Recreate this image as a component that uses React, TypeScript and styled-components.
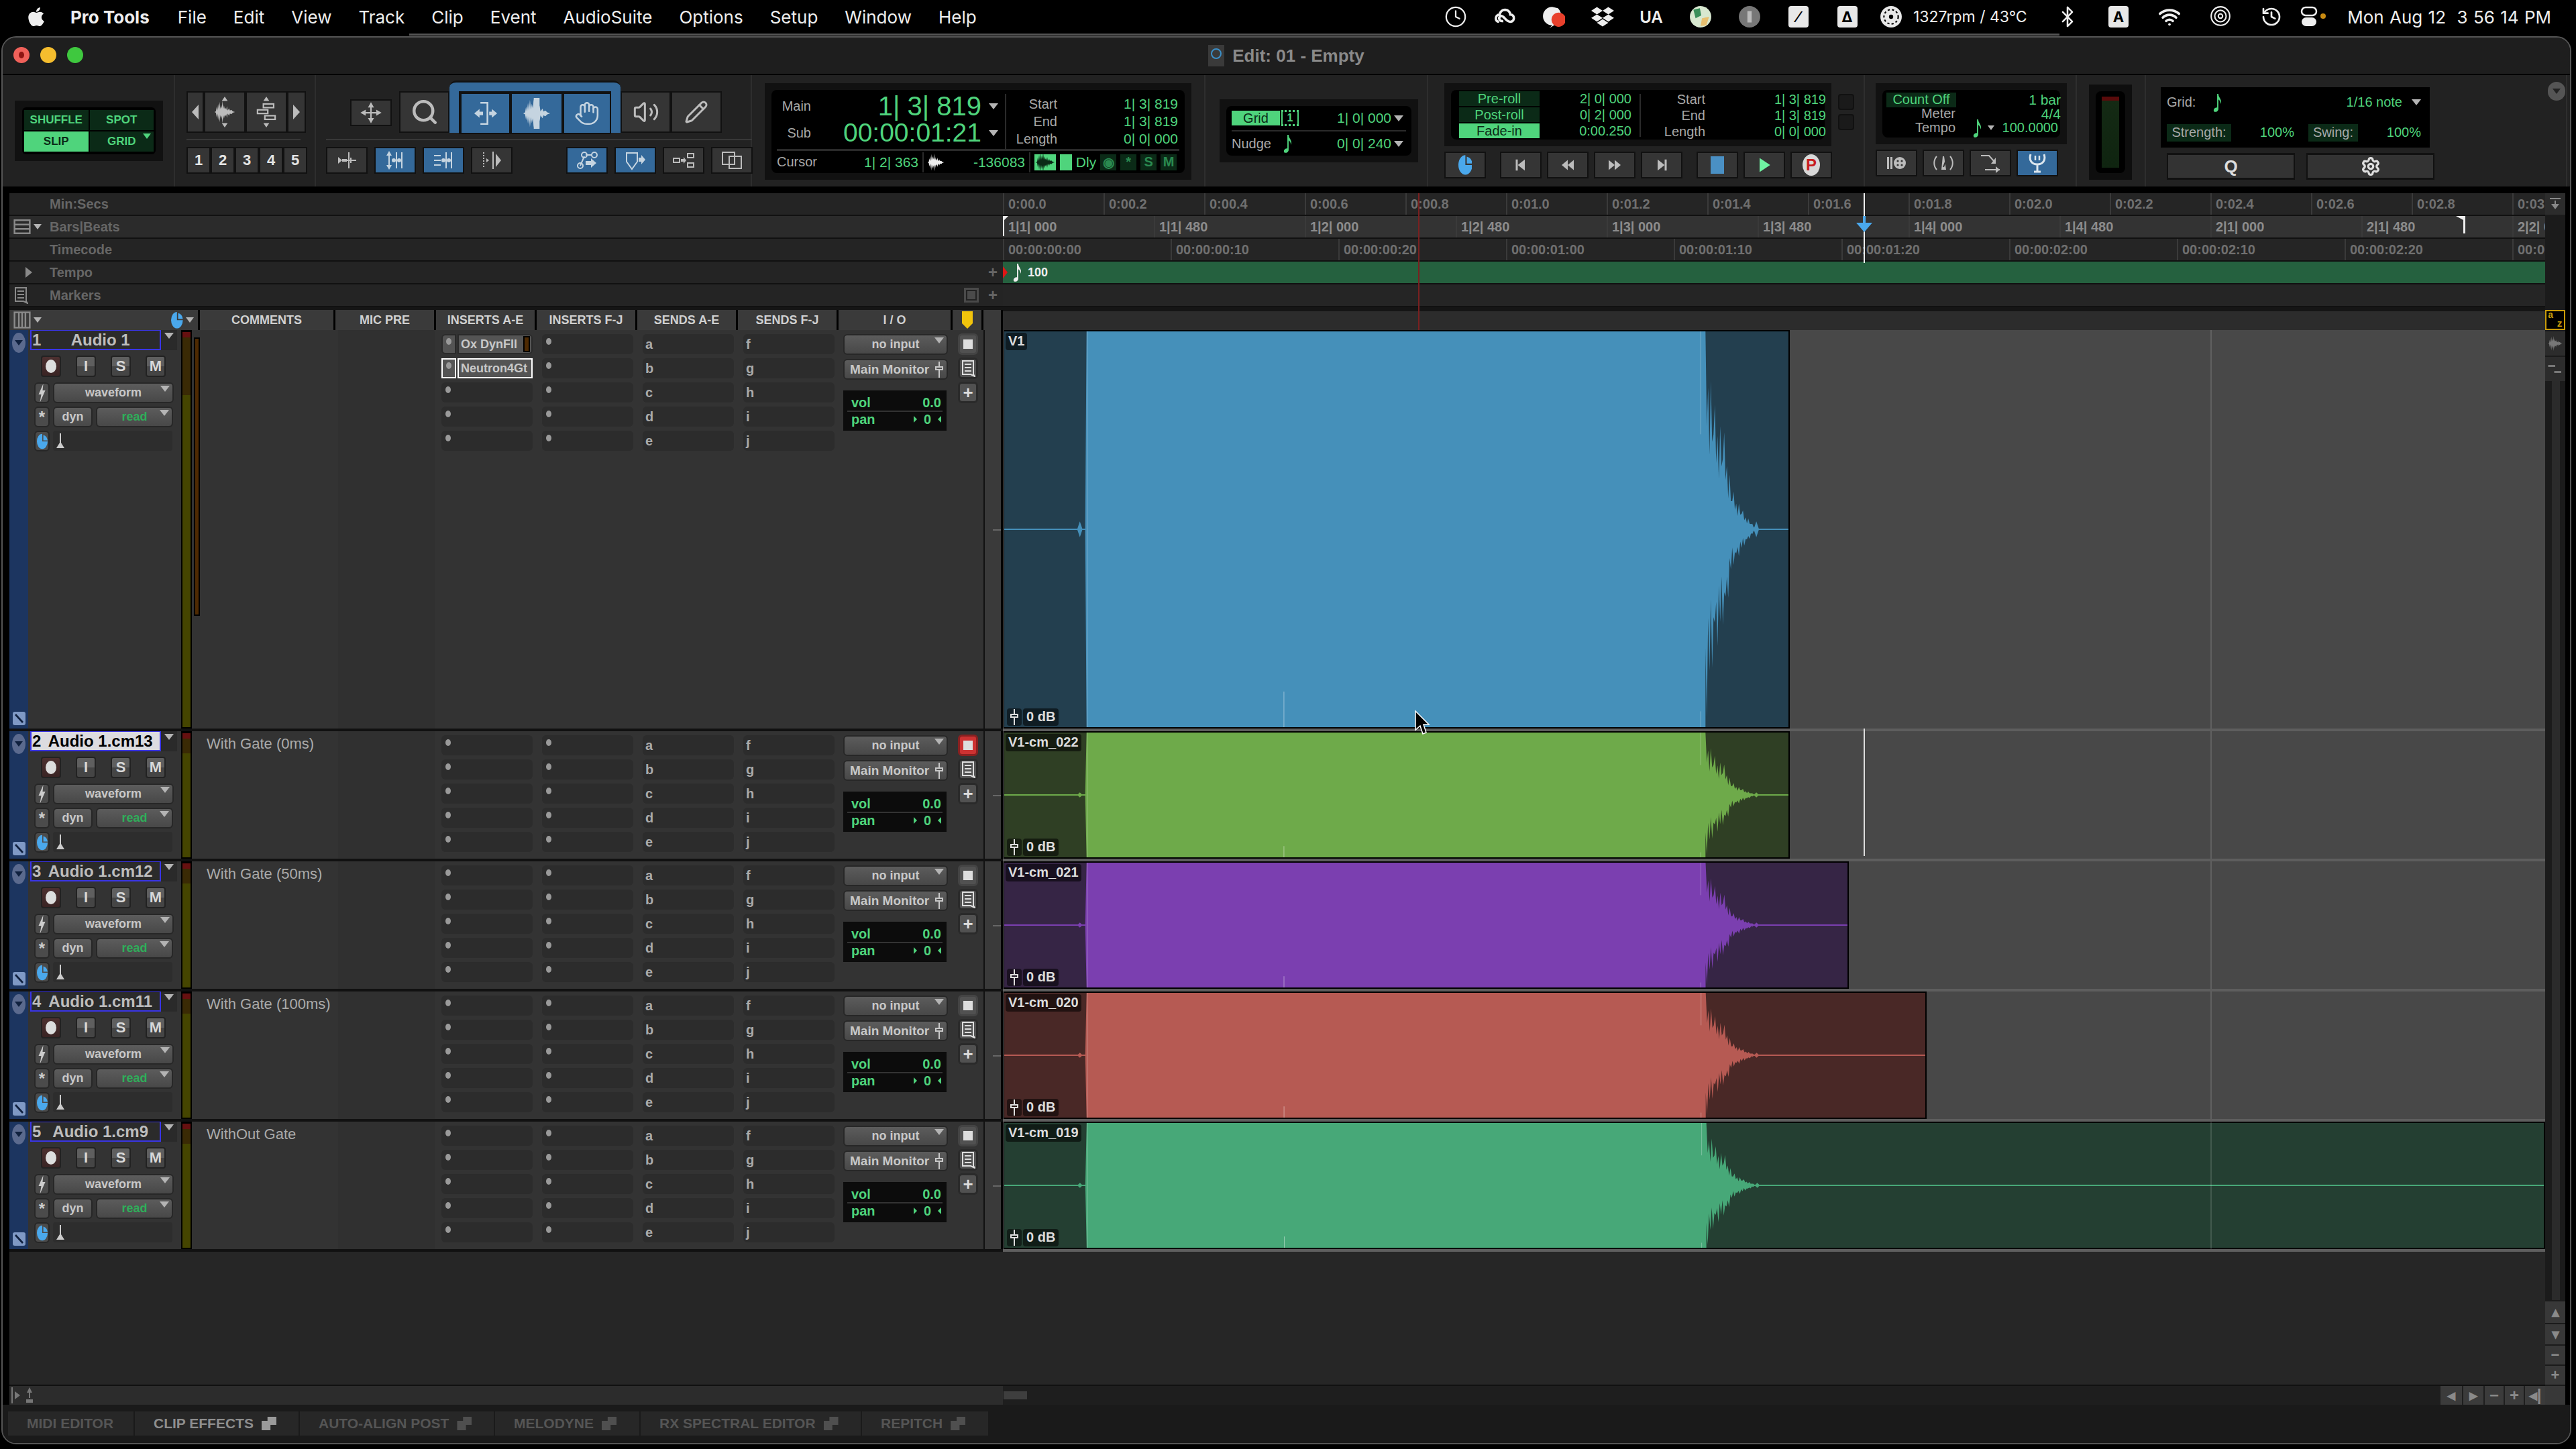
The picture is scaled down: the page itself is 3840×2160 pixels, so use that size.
import { ReactNode } from 'react';
import styled, { createGlobalStyle } from 'styled-components';
import { FaApple, FaDropbox } from 'react-icons/fa';
import { Bluetooth, Clock, Hand, History, Pencil, Search, Settings, Volume2, Wifi } from 'lucide-react';

const GREEN = '#4fd47c';
const DIM_GREEN = '#0b2a17';
const SANS = '"Liberation Sans", Arial, sans-serif';

const GlobalStyle = createGlobalStyle`
  html, body {
    margin: 0;
    width: 3840px;
    height: 2160px;
    background: #000;
    overflow: hidden;
    font-family: ${SANS};
  }
  * { box-sizing: border-box; }
`;

/* ---------- menu bar ---------- */

const MenuBar = styled.div`
  height: 50px;
  display: flex;
  align-items: center;
  padding: 0 37px 0 38px;
  color: #eee;
  font: 400 26px Inter, ${SANS};
`;

const MenuLeft = styled.div`
  display: flex;
  align-items: center;
  gap: 40px;
  margin-left: 35px;
  flex: 1;
`;

const AppName = styled.span`
  font-weight: 700;
  margin-right: 2px;
`;

const MenuSlot = styled.div<{ $w?: number }>`
  width: ${(p) => p.$w ?? 73}px;
  display: flex;
  align-items: center;
  justify-content: center;
  font-size: 24px;
  font-weight: 600;
  flex: none;
`;

const MenuBadge = styled.div`
  width: 30px;
  height: 32px;
  border-radius: 4px;
  background: #e8e8e8;
  color: #000;
  font-size: 22px;
  font-weight: 700;
  display: flex;
  align-items: center;
  justify-content: center;
`;

const RpmText = styled.span`
  width: 196px;
  padding-left: 4px;
  font-size: 23px;
  flex: none;
  white-space: nowrap;
`;

const TimeText = styled.span`
  width: 329px;
  text-align: right;
  font-size: 26px;
  word-spacing: 1px;
  white-space: pre;
  flex: none;
`;

const BehindEdge = styled.div`
  height: 4px;
  margin: 0 770px 0 610px;
  border-top: 3px solid #555;
`;

/* ---------- window ---------- */

const Window = styled.div`
  width: 3831px;
  height: 2099px;
  margin-left: 2px;
  border: 2px solid #555;
  border-radius: 22px;
  background: #1a1a1a;
  overflow: hidden;
  display: flex;
  flex-direction: column;
`;

const TitleBar = styled.div`
  height: 56px;
  flex: none;
  background: #1e1e1e;
  border-bottom: 2px solid #000;
  display: flex;
  align-items: center;
  justify-content: center;
  position: relative;
  gap: 12px;
  color: #8a8a8a;
  font: 700 26px ${SANS};
`;

const Lights = styled.div`
  position: absolute;
  left: 16px;
  top: 14px;
  display: flex;
  gap: 16px;
`;

const Light = styled.span<{ $c: string }>`
  width: 24px;
  height: 24px;
  border-radius: 50%;
  background: ${(p) => p.$c};
  display: flex;
  align-items: center;
  justify-content: center;
`;

const LightDot = styled.span`
  width: 8px;
  height: 10px;
  border-radius: 50%;
  background: #8e1512;
`;

/* ---------- toolbar ---------- */

const Toolbar = styled.div`
  height: 166px;
  flex: none;
  background: #222;
  display: flex;
`;

const Section = styled.div<{ $w: number; $left?: number; $top?: number }>`
  width: ${(p) => p.$w}px;
  flex: none;
  padding: ${(p) => p.$top ?? 12}px 0 0 ${(p) => p.$left ?? 0}px;
  border-right: 2px solid #2e2e2e;
`;

const ModePanel = styled.div`
  width: 221px;
  height: 90px;
  background: #111;
  padding: 10px 11px;
`;

const ModeGrid = styled.div`
  height: 70px;
  background: #000;
  border-radius: 6px;
  padding: 4px 3px;
  display: grid;
  grid-template-columns: 1fr 1fr;
  grid-template-rows: 1fr 1fr;
  gap: 2px;
`;

const ModeCell = styled.div<{ $on?: boolean }>`
  background: ${(p) => (p.$on ? GREEN : DIM_GREEN)};
  color: ${(p) => (p.$on ? '#0b2a17' : GREEN)};
  font: 700 17px ${SANS};
  display: flex;
  align-items: center;
  justify-content: center;
  position: relative;
`;

const Strip = styled.div`
  display: flex;
  height: 62px;
`;

const IconBtn = styled.div<{ $w?: number; $h?: number; $on?: boolean }>`
  width: ${(p) => p.$w ?? 62}px;
  height: ${(p) => p.$h ?? 40}px;
  flex: none;
  background: ${(p) => (p.$on ? '#34699a' : '#353535')};
  border: 2px solid #111;
  color: ${(p) => (p.$on ? '#c5d4e0' : '#bcbcbc')};
  display: flex;
  align-items: center;
  justify-content: center;
  position: relative;
  font: 700 22px ${SANS};
`;

const NumberBtn = styled(IconBtn)`
  color: #e4e4e4;
`;

const RuleLine = styled.div<{ $w: number }>`
  width: ${(p) => p.$w}px;
  height: 2px;
  background: #383838;
  margin: 9px 0 10px;
`;

const BtnRow = styled.div<{ $gap?: number }>`
  display: flex;
  align-items: center;
  gap: ${(p) => p.$gap ?? 10}px;
`;

const RowSpace = styled.div<{ $w: number }>`
  width: ${(p) => p.$w}px;
  flex: none;
`;

const ToolTop = styled.div`
  height: 78px;
  display: flex;
  align-items: flex-end;
  padding-left: 36px;
`;

const MoveBtn = styled(IconBtn)`
  margin: 0 11px 10px 0;
`;

const SmartBox = styled.div`
  width: 255px;
  height: 78px;
  flex: none;
  background: #34699a;
  border-top: 3px solid #111;
  border-radius: 10px 10px 0 0;
  padding: 13px 14px 0;
`;

const SmartInner = styled.div`
  display: flex;
  border: 2px solid #111;
  border-bottom: none;
`;

const Panel = styled.div<{ $w: number; $h: number; $left?: number }>`
  width: ${(p) => p.$w}px;
  height: ${(p) => p.$h}px;
  margin-left: ${(p) => p.$left ?? 0}px;
  background: #111;
  padding: 10px;
  flex: none;
`;

const PanelInner = styled.div`
  height: 100%;
  background: #000;
  border-radius: 8px;
  position: relative;
`;

const CounterGrid = styled(PanelInner)`
  display: grid;
  grid-template-columns: 348px 268px;
  grid-template-rows: 88px 36px;
  color: #a8a8a8;
  font: 400 20px ${SANS};
`;

const MainPane = styled.div`
  display: grid;
  grid-template-columns: 59px 254px 35px;
  grid-template-rows: 40px 40px;
  padding-top: 4px;
  align-items: center;
`;

const Label = styled.div`
  text-align: right;
  color: #a8a8a8;
  white-space: nowrap;
`;

const Big = styled.div<{ $size?: number }>`
  text-align: right;
  color: ${GREEN};
  font-size: ${(p) => p.$size ?? 40}px;
  white-space: pre;
`;

const Val = styled.div`
  text-align: right;
  color: ${GREEN};
  font-size: 21px;
  white-space: pre;
`;

const Caret = styled.span<{ $s?: number; $c?: string }>`
  display: inline-block;
  width: 0;
  height: 0;
  flex: none;
  border-left: ${(p) => p.$s ?? 7}px solid transparent;
  border-right: ${(p) => p.$s ?? 7}px solid transparent;
  border-top: ${(p) => (p.$s ?? 7) + 2}px solid ${(p) => p.$c ?? '#b4b4b4'};
  justify-self: center;
`;

const SmallPane = styled.div`
  display: grid;
  grid-template-columns: 76px 180px;
  grid-auto-rows: 26px;
  padding-top: 2px;
  border-left: 2px solid #2a2a2a;
  margin: 6px 0 0;
  align-items: center;
`;

const CursorRow = styled.div`
  grid-column: 1 / span 2;
  margin: 0 8px;
  border-top: 3px solid #2a2a2a;
  display: flex;
  align-items: center;
  height: 36px;
`;

const CursorCell = styled.div<{ $w: number; $sep?: boolean }>`
  width: ${(p) => p.$w}px;
  flex: none;
  display: flex;
  align-items: center;
  justify-content: space-between;
  height: 30px;
  padding: 0 6px 0 0;
  border-right: ${(p) => (p.$sep ? '2px solid #2a2a2a' : 'none')};
`;

const MiniTag = styled.div<{ $w?: number; $on?: boolean }>`
  width: ${(p) => p.$w ?? 24}px;
  height: 24px;
  margin-left: 6px;
  background: ${(p) => (p.$on ? GREEN : DIM_GREEN)};
  color: ${(p) => (p.$on ? '#0b2a17' : '#2a8a50')};
  font: 700 20px ${SANS};
  display: flex;
  align-items: center;
  justify-content: center;
  flex: none;
`;

const FilmTag = styled.div`
  width: 26px;
  height: 24px;
  margin-left: 2px;
  border-top: 3px dotted ${GREEN};
  border-bottom: 3px dotted ${GREEN};
  border-left: 2px solid ${GREEN};
  border-right: 2px solid ${GREEN};
  color: ${GREEN};
  font: 700 16px ${SANS};
  display: flex;
  align-items: center;
  justify-content: center;
  flex: none;
`;

const GridPane = styled(PanelInner)`
  display: grid;
  grid-template-rows: 36px 38px;
  padding: 0 8px;
  color: #a8a8a8;
  font: 400 20px ${SANS};
`;

const GridRow = styled.div<{ $line?: boolean }>`
  display: flex;
  align-items: center;
  border-top: ${(p) => (p.$line ? '2px solid #2a2a2a' : 'none')};
`;

const GridTag = styled.div`
  width: 72px;
  height: 22px;
  background: ${GREEN};
  color: #0b2a17;
  display: flex;
  align-items: center;
  justify-content: center;
  flex: none;
`;

const Grow = styled.div`
  flex: 1;
`;

const CaretSlot = styled.div`
  width: 22px;
  display: flex;
  justify-content: center;
  flex: none;
`;

const PrePane = styled(PanelInner)`
  display: grid;
  grid-template-columns: 269px 2px 96px 180px;
  padding: 2px 0 0 12px;
  font: 400 21px ${SANS};
`;

const PreTags = styled.div`
  display: grid;
  grid-template-columns: 120px 137px;
  grid-auto-rows: 22px;
  row-gap: 2px;
  align-items: center;
`;

const PreTag = styled.div<{ $on?: boolean }>`
  height: 22px;
  background: ${(p) => (p.$on ? GREEN : DIM_GREEN)};
  color: ${(p) => (p.$on ? '#0b2a17' : GREEN)};
  font-size: 20px;
  display: flex;
  align-items: center;
  justify-content: center;
`;

const PreSep = styled.div`
  background: #2a2a2a;
  margin: 4px 0;
`;

const PreRight = styled.div`
  display: grid;
  grid-template-columns: 96px 180px;
  grid-column: 3 / span 2;
  grid-auto-rows: 24px;
  align-items: center;
  font-size: 20px;
`;

const PreValue = styled(Val)`
  font-size: 20px;
`;

const SideSquares = styled.div`
  display: flex;
  flex-direction: column;
  gap: 6px;
  margin: 16px 0 0 10px;
`;

const SideSquare = styled.div`
  width: 24px;
  height: 24px;
  background: #1a1a1a;
  border: 2px solid #111;
  border-radius: 4px;
`;

const TopRow = styled.div`
  display: flex;
  align-items: flex-start;
`;

const TransportRow = styled(BtnRow)`
  margin-top: 8px;
  height: 40px;
  gap: 8px;
`;

const StopBlock = styled.span`
  width: 20px;
  height: 26px;
  background: #4a90c4;
  display: block;
`;

const RecordDisc = styled.span`
  width: 26px;
  height: 32px;
  border-radius: 50%;
  background: #d8d8d8;
  color: #c81e1e;
  font: 700 24px ${SANS};
  display: flex;
  align-items: center;
  justify-content: center;
`;

const CountPane = styled(PanelInner)`
  display: grid;
  grid-template-columns: 103px 157px;
  grid-auto-rows: 21px;
  align-items: center;
  font: 400 20px ${SANS};
  padding: 4px 0 0 6px;
`;

const CountTag = styled.div`
  height: 22px;
  width: 104px;
  background: ${DIM_GREEN};
  color: ${GREEN};
  display: flex;
  align-items: center;
  justify-content: center;
`;

const TempoCell = styled.div`
  display: flex;
  align-items: center;
  justify-content: flex-end;
  color: ${GREEN};
  gap: 4px;
  padding-right: 4px;
`;

const TempoValue = styled.span`
  margin-left: 8px;
`;

const MeterOuter = styled.div`
  width: 64px;
  height: 142px;
  margin: 2px 0 0 18px;
  background: #0e0e0e;
  padding: 10px;
`;

const MeterInner = styled.div`
  height: 100%;
  background: #000;
  border-radius: 8px;
  padding: 8px 9px;
`;

const MeterBar = styled.div`
  height: 100%;
  background: linear-gradient(#5a0b0b 0 6px, #142a14 6px, #0f2410);
`;

const QuantPanel = styled.div`
  width: 401px;
  height: 90px;
  margin-left: 22px;
  background: #000;
  padding: 0 14px 0 9px;
  color: #a8a8a8;
  font: 400 20px ${SANS};
  display: grid;
  grid-template-rows: 1fr 1fr;
`;

const QuantRow = styled.div`
  display: flex;
  align-items: center;
`;

const QuantTag = styled.div<{ $w: number }>`
  width: ${(p) => p.$w}px;
  height: 26px;
  background: ${DIM_GREEN};
  display: flex;
  align-items: center;
  justify-content: center;
  flex: none;
`;

const QuantVal = styled.div<{ $w: number }>`
  width: ${(p) => p.$w}px;
  color: ${GREEN};
  text-align: right;
  flex: none;
`;

const WideBtn = styled(IconBtn)`
  background: #333;
  border-top: 3px solid #111;
  border-bottom: 3px solid #111;
  color: #ddd;
  font-size: 26px;
`;

const QuantButtons = styled(BtnRow)`
  margin: 8px 0 0 31px;
  gap: 17px;
`;

const Knob = styled.div`
  position: absolute;
  right: 16px;
  top: 122px;
  width: 26px;
  height: 28px;
  border-radius: 13px;
  background: #555;
  display: flex;
  align-items: center;
  justify-content: center;
`;

const NoteColor = styled.span`
  color: ${GREEN};
  display: flex;
  margin-left: 14px;
`;

/* ---------- main area ---------- */

const Body = styled.div`
  height: 1816px;
  flex: none;
  background: #000;
  border-top: 10px solid #000;
  padding: 0 7px 0 10px;
  display: grid;
  grid-template-columns: 1481px 2299px 30px;
  position: relative;
`;

const LeftCol = styled.div`
  display: flex;
  flex-direction: column;
  background: #111;
`;

const EditCol = styled.div`
  display: flex;
  flex-direction: column;
  position: relative;
  overflow: hidden;
  background: #111;
`;

const RightCol = styled.div`
  display: flex;
  flex-direction: column;
  background: #1b1b1b;
`;

const RulerLabel = styled.div<{ $hi?: boolean }>`
  height: 32px;
  margin-bottom: 2px;
  background: ${(p) => (p.$hi ? '#2b2b2b' : '#242424')};
  display: flex;
  align-items: center;
  color: #666;
  font: 700 20px ${SANS};
  position: relative;
`;

const RulerIcon = styled.div`
  width: 60px;
  flex: none;
  display: flex;
  align-items: center;
  justify-content: flex-start;
  gap: 4px;
  padding-left: 6px;
  color: #8a8a8a;
`;

const RulerAdd = styled.div`
  position: absolute;
  right: 8px;
  top: 0;
  height: 100%;
  display: flex;
  align-items: center;
  gap: 14px;
  color: #666;
  font-size: 24px;
`;

const MarkerBtn = styled.div`
  width: 22px;
  height: 22px;
  background: #4a4a4a;
  border: 5px solid #4a4a4a;
  outline: 2px solid #222;
  outline-offset: -5px;
`;

const HeaderGap = styled.div`
  height: 4px;
  flex: none;
  background: #151515;
`;

const TrackCols = `
  display: grid;
  grid-template-columns: 28px 228px 28px 202px 150px 150px 150px 150px 150px 170px 46px 29px;
`;

const HeaderRow = styled.div`
  ${TrackCols}
  height: 30px;
  flex: none;
  background: #000;
  padding-bottom: 2px;
`;

const HeaderCell = styled.div<{ $span?: number }>`
  grid-column: span ${(p) => p.$span ?? 1};
  margin-right: 3px;
  background: #3a3a3a;
  color: #d0d0d0;
  font: 700 18px ${SANS};
  display: flex;
  align-items: center;
  justify-content: center;
  white-space: nowrap;
`;

const HeaderMain = styled(HeaderCell)`
  justify-content: space-between;
  padding: 0 6px;
  color: #8a8a8a;
`;

const InlineIcons = styled.div`
  display: flex;
  align-items: center;
  gap: 4px;
`;

const TrackRow = styled.div<{ $h: number }>`
  ${TrackCols}
  height: ${(p) => p.$h}px;
  flex: none;
  margin-bottom: 4px;
  background: #333;
`;

const BlueStrip = styled.div`
  background: #1c3560;
  position: relative;
  padding: 4px;
`;

const ExpandDot = styled.div`
  width: 20px;
  height: 30px;
  border-radius: 50%;
  background: #5b6a8e;
  display: flex;
  align-items: center;
  justify-content: center;
`;

const AutoBadge = styled.div`
  position: absolute;
  left: 5px;
  bottom: 5px;
  width: 19px;
  height: 20px;
  border-radius: 3px;
  background: #7f99c5;
  color: #10213f;
  display: flex;
  align-items: center;
  justify-content: center;
`;

const Controls = styled.div`
  display: flex;
  flex-direction: column;
  padding-left: 3px;
`;

const NameRow = styled.div`
  display: flex;
  height: 30px;
  flex: none;
`;

const NameBox = styled.div<{ $sel?: boolean }>`
  width: 195px;
  border: 2px solid #3a35e6;
  border-top-width: 1px;
  background: ${(p) => (p.$sel ? '#dcdce0' : '#2b2b2b')};
  color: ${(p) => (p.$sel ? '#000' : '#bdbdbd')};
  font: 700 24px ${SANS};
  display: flex;
  align-items: center;
  padding-left: 1px;
  white-space: nowrap;
`;

const NameText = styled.span`
  flex: 1;
  text-align: center;
`;

const NameMenu = styled.div`
  width: 24px;
  background: #2a2a2a;
  display: flex;
  justify-content: center;
  padding-top: 4px;
`;

const ButtonsRow = styled.div`
  display: flex;
  gap: 22px;
  margin: 8px 0 0 16px;
  height: 32px;
  flex: none;
`;

const TrackBtn = styled.div<{ $rec?: boolean }>`
  width: 30px;
  height: 32px;
  border: 2px solid #222;
  border-radius: 4px;
  background: ${(p) =>
    p.$rec ? 'linear-gradient(#4d3030, #3a2424)' : 'linear-gradient(#5f5f5f 50%, #454545 50%)'};
  color: #d8d8d8;
  font: 700 22px ${SANS};
  display: flex;
  align-items: center;
  justify-content: center;
`;

const RecDot = styled.span`
  width: 16px;
  height: 20px;
  border-radius: 50%;
  background: #ddd;
`;

const CtrlRow = styled.div<{ $mt?: number }>`
  display: flex;
  gap: 5px;
  margin: ${(p) => p.$mt ?? 5}px 0 0 6px;
  height: 31px;
  flex: none;
`;

const SmallBtn = styled.div`
  width: 23px;
  height: 31px;
  flex: none;
  border: 2px solid #272727;
  border-radius: 6px;
  background: #4b4b4b;
  color: #ccc;
  font: 700 24px ${SANS};
  display: flex;
  align-items: center;
  justify-content: center;
`;

const Select = styled.div<{ $w: number; $c?: string }>`
  width: ${(p) => p.$w}px;
  height: 31px;
  flex: none;
  border: 2px solid #272727;
  border-radius: 6px;
  background: linear-gradient(#5c5c5c, #484848);
  color: ${(p) => p.$c ?? '#c8c8c8'};
  font: 700 18px ${SANS};
  display: flex;
  align-items: center;
  justify-content: center;
  position: relative;
`;

const SelectCaret = styled.span`
  position: absolute;
  right: 4px;
  top: 3px;
  display: flex;
`;

const WellBox = styled.div`
  width: 178px;
  height: 30px;
  background: #2d2d2d;
  border-radius: 4px;
  padding: 4px;
  color: #ccc;
  display: flex;
  align-items: flex-end;
`;

const MeterCell = styled.div`
  display: flex;
  gap: 3px;
`;

const TrackMeter = styled.div`
  width: 16px;
  flex: none;
  border: 2px solid #000;
  border-top-width: 3px;
  background: linear-gradient(#661010 0 8px, #3a2a05 8px, #3a2a05 16%, #454500 16%, #454500);
`;

const FxMeter = styled.div<{ $hi: boolean }>`
  width: 9px;
  margin-top: 11px;
  height: 415px;
  display: ${(p) => (p.$hi ? 'block' : 'none')};
  background: #4e2a02;
  border: 2px solid #000;
`;

const CommentCell = styled.div`
  padding: 6px 0 0 10px;
  color: #aaa;
  font: 400 22px ${SANS};
  white-space: nowrap;
`;

const MicCell = styled.div`
  background: #303030;
  margin: 0 2px 0 4px;
`;

const SlotCol = styled.div`
  display: flex;
  flex-direction: column;
  gap: 6px;
  padding: 6px 6px 0 8px;
`;

const Slot = styled.div`
  height: 30px;
  flex: none;
  background: #2c2c2c;
  border-radius: 6px;
  display: flex;
  align-items: center;
  color: #aaa;
  font: 700 20px ${SANS};
  padding-left: 4px;
`;

const SlotDot = styled.span`
  display: block;
  width: 8px;
  height: 10px;
  flex: none;
  margin: -8px 0 0 2px;
  border-radius: 50%;
  background: #9a9a9a;
`;

const PlugSlot = styled.div<{ $sel?: boolean }>`
  height: 30px;
  flex: none;
  display: grid;
  grid-template-columns: 22px 1fr;
  gap: 2px;
  color: #c8c8c8;
  font: 700 18px ${SANS};
`;

const PlugToggle = styled.div<{ $sel?: boolean }>`
  background: #545454;
  border: 2px solid ${(p) => (p.$sel ? '#fff' : '#2a2a2a')};
  border-radius: ${(p) => (p.$sel ? '0' : '6px 0 0 6px')};
  padding: 12px 0 0 3px;
`;

const PlugName = styled.div<{ $sel?: boolean }>`
  background: #545454;
  border: 2px solid ${(p) => (p.$sel ? '#fff' : '#2a2a2a')};
  border-radius: ${(p) => (p.$sel ? '0' : '0 6px 6px 0')};
  display: flex;
  align-items: center;
  justify-content: space-between;
  padding: 0 2px 0 3px;
  white-space: nowrap;
  overflow: hidden;
`;

const PlugMeter = styled.span`
  width: 10px;
  height: 24px;
  border: 2px solid #000;
  background: #4e2a02;
  flex: none;
`;

const SendLetter = styled(Slot)`
  padding-left: 4px;
`;

const IoCol = styled.div`
  display: flex;
  flex-direction: column;
  gap: 6px;
  padding: 6px 0 0 7px;
`;

const OutputBtn = styled(Select)`
  justify-content: space-between;
  padding: 0 4px 0 8px;
  font-size: 19px;
  white-space: nowrap;
`;

const VolBox = styled.div`
  width: 154px;
  height: 60px;
  margin-top: 10px;
  background: #0c0c0c;
  padding: 6px 6px;
  color: ${GREEN};
  font: 700 20px ${SANS};
`;

const VolRow = styled.div<{ $line?: boolean }>`
  height: 24px;
  display: flex;
  align-items: center;
  justify-content: space-between;
  padding: 0 2px 0 6px;
  border-top: ${(p) => (p.$line ? '2px solid #333' : 'none')};
`;

const PanValue = styled.span`
  display: flex;
  align-items: center;
  gap: 10px;
`;

const PanArrow = styled.span<{ $flip?: boolean }>`
  width: 0;
  height: 0;
  border-top: 5px solid transparent;
  border-bottom: 5px solid transparent;
  ${(p) => (p.$flip ? `border-right: 5px solid ${GREEN};` : `border-left: 5px solid ${GREEN};`)}
`;

const SideCol = styled.div`
  display: flex;
  flex-direction: column;
  gap: 4px;
  padding: 5px 0 0 8px;
`;

const SideBtn = styled.div<{ $first?: boolean; $armed?: boolean }>`
  width: 30px;
  height: 32px;
  flex: none;
  border: 3px solid ${(p) => (p.$armed ? '#8a2020' : p.$first ? '#444' : '#2a2a2a')};
  border-radius: 6px;
  background: ${(p) => (p.$armed ? '#cc3232' : '#515151')};
  color: #ddd;
  display: flex;
  align-items: center;
  justify-content: center;
  font: 700 26px ${SANS};
`;

const Gutter = styled.div`
  background: #3a3a3a;
  border-left: 2px solid #111;
  border-right: 3px solid #000;
  position: relative;

  &::after {
    content: '';
    position: absolute;
    left: 12px;
    right: 0;
    top: 50%;
    height: 2px;
    background: #666;
  }
`;

const BlankLeft = styled.div`
  flex: 1;
  background: #262626;
`;

const BottomBar = styled.div`
  height: 28px;
  flex: none;
  margin-top: 2px;
  background: #2c2c2c;
  display: flex;
  align-items: center;
  color: #777;
  gap: 4px;
  padding-left: 2px;
`;

/* ---------- timeline ---------- */

const RulerTrack = styled.div<{ $hi?: boolean }>`
  height: 32px;
  flex: none;
  margin-bottom: 2px;
  display: flex;
  background: ${(p) => (p.$hi ? '#333' : '#252525')};
  color: ${(p) => (p.$hi ? '#8c8c8c' : '#707070')};
  font: 700 20px ${SANS};
  overflow: hidden;
`;

const Tick = styled.div<{ $w: number }>`
  width: ${(p) => p.$w}px;
  flex: none;
  padding-left: 6px;
  border-left: 2px solid #3a3a3a;
  display: flex;
  align-items: center;
  white-space: nowrap;
`;

const TempoTrack = styled.div`
  height: 32px;
  flex: none;
  margin-bottom: 2px;
  background: #25613f;
  display: flex;
  align-items: center;
  gap: 4px;
  color: #eee;
  font: 700 18px ${SANS};
`;

const RedFlag = styled.span`
  width: 0;
  height: 0;
  flex: none;
  border-left: 7px solid #e01616;
  border-top: 9px solid transparent;
  border-bottom: 9px solid transparent;
`;

const EmptyRuler = styled.div`
  height: 32px;
  flex: none;
  margin-bottom: 2px;
  background: #252525;
`;

const EditHeader = styled.div`
  height: 30px;
  flex: none;
  background: #2c2c2c;
  border-top: 2px solid #151515;
  margin-top: 0;
`;

const Playhead = styled.div<{ $x: number; $h: number; $c: string }>`
  position: absolute;
  left: ${(p) => p.$x}px;
  top: 0;
  width: 2px;
  height: ${(p) => p.$h}px;
  background: ${(p) => p.$c};
  z-index: 3;
`;

const FlagMark = styled.div<{ $x: number }>`
  position: absolute;
  left: ${(p) => p.$x}px;
  top: 34px;
  z-index: 4;
  display: flex;
`;

const SelectionLine = styled.div`
  position: absolute;
  left: 1283px;
  top: 798px;
  width: 2px;
  height: 190px;
  background: #ddd;
`;

const Lane = styled.div<{ $h: number }>`
  height: ${(p) => p.$h + 4}px;
  flex: none;
  background: #484848;
  border-bottom: 4px solid #5e5e5e;
  position: relative;
  display: flex;

  &::after {
    content: '';
    position: absolute;
    left: 1800px;
    top: 0;
    bottom: 0;
    width: 2px;
    background: rgba(255, 255, 255, 0.14);
  }
`;

const Clip = styled.div<{ $w: number; $bg: string }>`
  width: ${(p) => p.$w}px;
  margin-left: 1px;
  flex: none;
  background: ${(p) => p.$bg};
  border: 2px solid #000;
  border-left-width: 1px;
  position: relative;
  overflow: hidden;
`;

const ClipWave = styled.svg`
  position: absolute;
  inset: 0;
  width: 100%;
  height: 100%;
`;

const ClipName = styled.div`
  position: absolute;
  left: 2px;
  top: 2px;
  height: 26px;
  padding: 0 4px;
  background: rgba(0, 0, 0, 0.55);
  border-radius: 4px;
  color: #ddd;
  font: 700 20px ${SANS};
  line-height: 24px;
`;

const ClipGain = styled.div`
  position: absolute;
  left: 4px;
  bottom: 2px;
  display: flex;
  align-items: stretch;
  gap: 2px;
  height: 26px;
  color: #ddd;
  font: 700 20px ${SANS};
`;

const GainFader = styled.div`
  width: 22px;
  background: rgba(0, 0, 0, 0.5);
  border-radius: 4px;
  display: flex;
  align-items: center;
  justify-content: center;
`;

const GainValue = styled.div`
  padding: 0 5px;
  background: rgba(0, 0, 0, 0.55);
  border-radius: 4px;
  line-height: 24px;
  white-space: nowrap;
`;

const BlankEdit = styled.div`
  flex: 1;
  background: #262626;
`;

const EditScroll = styled.div`
  height: 28px;
  flex: none;
  margin-top: 2px;
  background: #1e1e1e;
  display: flex;
  align-items: center;
`;

const ScrollThumb = styled.div`
  width: 35px;
  height: 12px;
  margin-left: 1px;
  background: #3e3e3e;
`;

const NavBtn = styled.div<{ $w: number }>`
  width: ${(p) => p.$w}px;
  height: 28px;
  flex: none;
  margin-left: 2px;
  background: #3b3b3b;
  color: #8a8a8a;
  font: 700 24px ${SANS};
  display: flex;
  align-items: center;
  justify-content: center;
`;

const SideRulerBtn = styled.div`
  height: 32px;
  flex: none;
  background: #2c2c2c;
  color: #888;
  display: flex;
  align-items: center;
  justify-content: center;
`;

const SortBox = styled.div`
  margin-top: 142px;
  height: 30px;
  flex: none;
  background: #000;
  border: 2px solid #c99b0a;
  color: #c99b0a;
  font: 700 14px "Liberation Mono", monospace;
  display: flex;
  justify-content: space-between;
  padding: 0 2px;
  line-height: 13px;
`;

const SortZ = styled.span`
  align-self: flex-end;
`;

const ScrollSide = styled.div`
  height: 36px;
  flex: none;
  margin-top: 2px;
  background: #2c2c2c;
  color: #777;
  display: flex;
  align-items: center;
  justify-content: center;
`;

const ScrollTrack = styled.div`
  flex: 1;
  margin: 0 8px 0 10px;
  background: #2b2b2b;
`;

const VertBtn = styled.div<{ $h: number }>`
  height: ${(p) => p.$h}px;
  flex: none;
  margin-top: 2px;
  background: #383838;
  color: #8a8a8a;
  font: 700 22px ${SANS};
  display: flex;
  align-items: center;
  justify-content: center;
`;

const CursorArrow = styled.svg`
  position: absolute;
  left: 2108px;
  top: 1058px;
  z-index: 5;
`;

/* ---------- tabs ---------- */

const TabBar = styled.div`
  flex: 1;
  margin-top: 10px;
  background: #1a1a1a;
  display: flex;
  align-items: flex-start;
  padding-left: 8px;
`;

const Tab = styled.div<{ $w: number; $on?: boolean }>`
  width: ${(p) => p.$w}px;
  height: 36px;
  flex: none;
  background: #272727;
  border-right: 2px solid #1a1a1a;
  color: ${(p) => (p.$on ? '#8e8e8e' : '#555')};
  font: 700 21px ${SANS};
  display: flex;
  align-items: center;
  gap: 12px;
  padding-left: 28px;
  white-space: nowrap;
`;

const TabIcon = styled.span<{ $on?: boolean }>`
  width: 22px;
  height: 20px;
  flex: none;
  background: ${(p) => (p.$on ? '#9a9a9a' : '#4f4f4f')};
  clip-path: polygon(40% 0, 100% 0, 100% 60%, 60% 60%, 60% 100%, 0 100%, 0 30%, 40% 30%);
`;

const FillSquare = styled.span`
  width: 14px;
  height: 14px;
  background: currentColor;
  display: block;
`;

/* ---------- drawings ---------- */

const Svg = ({ s = 32, h, vb = '0 0 32 32', children, c = 'currentColor' }: { s?: number; h?: number; vb?: string; children: ReactNode; c?: string }) => (
  <svg width={s} height={h ?? s} viewBox={vb} fill={c} stroke="none">
    {children}
  </svg>
);

const Poly = ({ p }: { p: string }) => <polygon points={p} />;

const spikyWave =
  'M2 16 L4 15 L5 9 L6 14 L7 5 L8 13 L9 2 L10 12 L11 6 L12 11 L13 1 L14 12 L15 7 L16 12 L17 10 L18 13 L19 8 L20 14 L22 11 L23 14 L25 13 L27 15 L30 16 ' +
  'L27 17 L25 19 L23 18 L22 21 L20 18 L19 24 L18 19 L17 22 L16 20 L15 25 L14 20 L13 31 L12 21 L11 26 L10 20 L9 30 L8 19 L7 27 L6 18 L5 23 L4 17 Z';

const WaveIcon = () => <Svg><path d={spikyWave} /></Svg>;

const WaveZoomIcon = () => (
  <Svg s={46} vb="0 0 32 42">
    <Poly p="16,0 20,6 12,6" />
    <path transform="translate(0 5)" d={spikyWave} />
    <Poly p="16,42 20,36 12,36" />
  </Svg>
);

const TrackZoomIcon = () => (
  <Svg s={46} vb="0 0 32 42">
    <Poly p="16,0 20,6 12,6" />
    <g fill="none" stroke="currentColor" strokeWidth="2">
      <rect x="12" y="10" width="14" height="5" />
      <rect x="4" y="18" width="14" height="5" />
      <rect x="14" y="26" width="14" height="5" />
    </g>
    <Poly p="16,42 20,36 12,36" />
  </Svg>
);

const MoveIcon = () => (
  <Svg s={36}>
    <path d="M16 2 L20 9 L17 9 L17 15 L23 15 L23 12 L30 16 L23 20 L23 17 L17 17 L17 23 L20 23 L16 30 L12 23 L15 23 L15 17 L9 17 L9 20 L2 16 L9 12 L9 15 L15 15 L15 9 L12 9 Z" />
  </Svg>
);

const TrimIcon = () => (
  <Svg s={42} c="#c5d4e0">
    <path d="M10 3 H19 V29 H10 V27 H17 V5 H10 Z" />
    <Poly p="3,16 9,11 9,14 13,14 13,18 9,18 9,21" />
    <Poly p="29,16 23,11 23,14 20,14 20,18 23,18 23,21" />
  </Svg>
);

const SelectorIcon = () => (
  <Svg s={46} c="#c5d4e0">
    <path d={spikyWave} />
    <rect x="13" y="0" width="6" height="32" />
  </Svg>
);

const AutoIcon = () => (
  <Svg s={16} vb="0 0 16 16">
    <path d="M1 3 L3 1 L14 13 L12 15 Z" />
  </Svg>
);

const Bolt = () => (
  <Svg s={22} h={28} vb="0 0 14 28">
    <Poly p="9,0 2,16 6,16 4,28 12,10 8,10" />
  </Svg>
);

const ClockBlue = ({ s = 20 }: { s?: number }) => (
  <Svg s={s * 0.8} h={s * 1.3} vb="0 0 20 28" c="#4aa8ec">
    <path d="M10 0 A10 14 0 1 0 20 14 L10 14 Z M12 2 L12 12 L20 12 A10 12 0 0 0 12 2 Z" />
  </Svg>
);

const TrackRowsIcon = () => (
  <Svg s={26}>
    <g fill="none" stroke="currentColor" strokeWidth="3">
      <rect x="2" y="4" width="28" height="24" />
      <path d="M2 12 H30 M2 20 H30" />
    </g>
  </Svg>
);

const ColumnsIcon = () => (
  <Svg s={26}>
    <g fill="none" stroke="currentColor" strokeWidth="3">
      <rect x="2" y="2" width="28" height="28" />
      <path d="M10 2 V30 M16 2 V30 M22 2 V30" />
    </g>
  </Svg>
);

const NoteIcon = () => (
  <Svg s={22} h={30} vb="0 0 16 32">
    <path d="M7 2 H9 C9 8 15 10 13 18 C12 14 11 12 9 11 V26 C9 30 4 32 2 30 C0 27 4 23 7 24 Z" />
  </Svg>
);

const CommentIcon = () => (
  <Svg s={22} h={26} vb="0 0 22 26">
    <path fill="none" stroke="currentColor" strokeWidth="2" d="M3 2 H19 V22 L21 25 L15 22 H3 Z M6 7 H16 M6 12 H16 M6 17 H16" />
  </Svg>
);

const Fork = () => (
  <Svg s={14} h={22} vb="0 0 14 22">
    <path d="M6 0 H8 V14 L13 22 H1 L6 14 Z" />
  </Svg>
);

const GainIcon = () => (
  <Svg s={14} h={24} vb="0 0 14 24">
    <path d="M6 0 H8 V7 H13 V13 H8 V24 H6 V13 H1 V7 H6 Z M3 9 V11 H11 V9 Z" fillRule="evenodd" />
  </Svg>
);

const ToolRowIcon = ({ kind }: { kind: string }) => {
  const common = { fill: 'none', stroke: 'currentColor', strokeWidth: 2 };
  return (
    <Svg s={32}>
      {kind === 'spot' && <><Poly p="3,11 9,16 3,21" /><rect x="9" y="14" width="7" height="4" /><path {...common} d="M19 4 V28 M16 16 H30 M22 12 V20" /></>}
      {kind === 'up' && <><path {...common} d="M7 4 V28 M18 4 V28 M26 4 V28" /><circle cx="14" cy="16" r="3" /><circle cx="22" cy="16" r="3" /><Poly p="7,2 11,9 3,9" /><Poly p="7,30 11,23 3,23" /></>}
      {kind === 'list' && <><path {...common} d="M2 9 H12 M2 16 H12 M2 23 H12 M20 4 V28 M28 4 V28" /><circle cx="16" cy="16" r="3" /><circle cx="24" cy="16" r="3" /></>}
      {kind === 'cut' && <><path {...common} strokeDasharray="2 2" d="M4 4 V28" /><path {...common} d="M18 3 V29" /><Poly p="8,13 12,16 8,19" /><Poly p="22,6 30,16 22,26" /></>}
      {kind === 'link' && <><path {...common} d="M6 24 L12 10 M14 8 H24 " /><circle {...common} cx="6" cy="24" r="4" /><circle {...common} cx="12" cy="8" r="4" /><circle {...common} cx="27" cy="8" r="4" /><Poly p="14,17 22,17 22,13 30,20 22,27 22,23 14,23" /></>}
      {kind === 'shield' && <><path {...common} d="M3 5 H19 V18 L11 29 L3 18 Z" /><Poly p="21,12 25,12 25,8 31,15 25,22 25,18 21,18" /></>}
      {kind === 'boxes' && <><rect {...common} x="1" y="13" width="9" height="6" /><Poly p="12,14 16,14 16,11 20,16 16,21 16,18 12,18" /><rect {...common} x="22" y="6" width="9" height="6" /><rect {...common} x="22" y="20" width="9" height="6" /></>}
      {kind === 'copy' && <><rect {...common} x="2" y="4" width="18" height="18" /><rect {...common} x="12" y="10" width="18" height="18" /></>}
      {kind === 'dial' && <><rect x="2" y="7" width="3" height="18" /><rect x="7" y="7" width="3" height="18" /><circle cx="21" cy="16" r="9" /><g fill="#353535"><circle cx="18" cy="13" r="1.6" /><circle cx="24" cy="13" r="1.6" /><circle cx="18" cy="19" r="1.6" /><circle cx="24" cy="19" r="1.6" /></g></>}
      {kind === 'click' && <><path {...common} d="M6 6 C1 12 1 20 6 26 M26 6 C31 12 31 20 26 26" /><path d="M13 26 L15 6 H17 L20 26 Z" /><path {...common} stroke="#353535" d="M16 22 L21 9" /></>}
      {kind === 'ramp' && <><path {...common} d="M2 5 H14 L22 14 M8 26 H30" /><Poly p="24,8 24,17 17,17" /><Poly p="24,21 30,26 24,31" /></>}
      {kind === 'lyre' && <><path fill="none" stroke="#dbe6ee" strokeWidth="3" d="M6 3 C3 12 8 18 16 18 C24 18 29 12 26 3 M16 18 V29 M11 29 H21" /><path fill="none" stroke="#dbe6ee" strokeWidth="2.5" d="M13 5 V12 M19 5 V12" /></>}
    </Svg>
  );
};

/* ---------- waveform ---------- */

const ENV: [number, number][] = [[1048, 1], [1062, 0.63], [1077, 0.48], [1087, 0.21], [1105, 0.09], [1122, 0.01]];
const TOP_JAG = [1, 0.55, 0.8, 0.45, 0.95, 0.6, 0.7];
const BOTTOM_JAG = [0.6, 1, 0.5, 0.85, 0.45, 0.95, 0.65, 0.75];

const envelope = (x: number) => {
  for (let i = 1; i < ENV.length; i++) {
    if (x <= ENV[i][0]) {
      const [x0, y0] = ENV[i - 1];
      const [x1, y1] = ENV[i];
      return y0 + ((x - x0) / (x1 - x0)) * (y1 - y0);
    }
  }
  return 0;
};

const buildWave = () => {
  const top: string[] = [];
  const bottom: string[] = [];
  let i = 0;
  for (let x = 1048; x <= 1122; x += 2) {
    const e = envelope(x);
    top.push(`L${x} ${(50 - 50 * e * TOP_JAG[i % TOP_JAG.length]).toFixed(1)}`);
    bottom.unshift(`L${x} ${(50 + 50 * e * BOTTOM_JAG[i % BOTTOM_JAG.length]).toFixed(1)}`);
    i++;
  }
  return `M121 50 L123 0 L1048 0 ${top.join(' ')} ${bottom.join(' ')} L1048 100 L123 100 Z`;
};

const WAVE_PATH = buildWave();

const Waveform = ({ w, color }: { w: number; color: string }) => (
  <ClipWave viewBox={`0 0 ${w} 100`} preserveAspectRatio="none">
    <line x1="0" y1="50" x2={w} y2="50" stroke={color} strokeWidth="2" vectorEffect="non-scaling-stroke" />
    <path d={WAVE_PATH} fill={color} />
    <path d="M109 50 L113 48 L117 50 L113 52 Z" fill={color} />
    <path d="M1120 50 L1124 48 L1128 50 L1124 52 Z" fill={color} />
    <line x1="124" y1="0" x2="124" y2="100" stroke="#fff" strokeOpacity="0.3" strokeWidth="1" vectorEffect="non-scaling-stroke" />
    <line x1="418" y1="91" x2="418" y2="100" stroke="#fff" strokeOpacity="0.45" strokeWidth="1" vectorEffect="non-scaling-stroke" />
    <line x1="1041" y1="0" x2="1041" y2="26" stroke="#fff" strokeOpacity="0.3" strokeWidth="1" vectorEffect="non-scaling-stroke" />
    <line x1="1041" y1="96" x2="1041" y2="100" stroke="#fff" strokeOpacity="0.3" strokeWidth="1" vectorEffect="non-scaling-stroke" />
  </ClipWave>
);

/* ---------- data ---------- */

const TRACKS = [
  { n: 1, name: 'Audio 1', comment: '', clip: 'V1', wave: '#4590ba', bg: '#233f4f', w: 1172, h: 594, sel: false },
  { n: 2, name: 'Audio 1.cm13', comment: 'With Gate (0ms)', clip: 'V1-cm_022', wave: '#6eaa4a', bg: '#2f3f24', w: 1172, h: 190, sel: true },
  { n: 3, name: 'Audio 1.cm12', comment: 'With Gate (50ms)', clip: 'V1-cm_021', wave: '#7b3fb0', bg: '#362545', w: 1260, h: 190, sel: false },
  { n: 4, name: 'Audio 1.cm11', comment: 'With Gate (100ms)', clip: 'V1-cm_020', wave: '#b65a53', bg: '#492826', w: 1376, h: 190, sel: false },
  { n: 5, name: 'Audio 1.cm9', comment: 'WithOut Gate', clip: 'V1-cm_019', wave: '#47a878', bg: '#243f32', w: 2298, h: 190, sel: false },
];

const SECS = ['0:00.0', '0:00.2', '0:00.4', '0:00.6', '0:00.8', '0:01.0', '0:01.2', '0:01.4', '0:01.6', '0:01.8', '0:02.0', '0:02.2', '0:02.4', '0:02.6', '0:02.8', '0:03.0'];
const BARS = ['1|1| 000', '1|1| 480', '1|2| 000', '1|2| 480', '1|3| 000', '1|3| 480', '1|4| 000', '1|4| 480', '2|1| 000', '2|1| 480', '2|2| 000'];
const CODES = ['00:00:00:00', '00:00:00:10', '00:00:00:20', '00:00:01:00', '00:00:01:10', '00:00:01:20', '00:00:02:00', '00:00:02:10', '00:00:02:20', '00:00:03:00'];
const HEADERS = ['COMMENTS', 'MIC PRE', 'INSERTS A-E', 'INSERTS F-J', 'SENDS A-E', 'SENDS F-J', 'I / O'];
const MENUS = ['File', 'Edit', 'View', 'Track', 'Clip', 'Event', 'AudioSuite', 'Options', 'Setup', 'Window', 'Help'];
const TABS: [string, number, boolean, boolean][] = [
  ['MIDI EDITOR', 189, false, false],
  ['CLIP EFFECTS', 246, true, true],
  ['AUTO-ALIGN POST', 291, false, true],
  ['MELODYNE', 217, false, true],
  ['RX SPECTRAL EDITOR', 330, false, true],
  ['REPITCH', 190, false, true],
];

/* ---------- track parts ---------- */

const InsertColumn = ({ plugs }: { plugs: boolean }) => (
  <SlotCol>
    {plugs ? (
      <>
        <PlugSlot>
          <PlugToggle><SlotDot /></PlugToggle>
          <PlugName>Ox DynFll<PlugMeter /></PlugName>
        </PlugSlot>
        <PlugSlot>
          <PlugToggle $sel><SlotDot /></PlugToggle>
          <PlugName $sel>Neutron4Gt</PlugName>
        </PlugSlot>
      </>
    ) : (
      <>
        <Slot><SlotDot /></Slot>
        <Slot><SlotDot /></Slot>
      </>
    )}
    <Slot><SlotDot /></Slot>
    <Slot><SlotDot /></Slot>
    <Slot><SlotDot /></Slot>
  </SlotCol>
);

const SendColumn = ({ letters }: { letters: string[] }) => (
  <SlotCol>
    {letters.map((l) => (
      <SendLetter key={l}>{l}</SendLetter>
    ))}
  </SlotCol>
);

const TrackControls = ({ t }: { t: (typeof TRACKS)[number] }) => (
  <TrackRow $h={t.h}>
    <BlueStrip>
      <ExpandDot><Caret $s={6} $c="#10213f" /></ExpandDot>
      <AutoBadge><AutoIcon /></AutoBadge>
    </BlueStrip>
    <Controls>
      <NameRow>
        <NameBox $sel={t.sel}>
          {t.n}
          <NameText>{t.name}</NameText>
        </NameBox>
        <NameMenu><Caret /></NameMenu>
      </NameRow>
      <ButtonsRow>
        <TrackBtn $rec><RecDot /></TrackBtn>
        <TrackBtn>I</TrackBtn>
        <TrackBtn>S</TrackBtn>
        <TrackBtn>M</TrackBtn>
      </ButtonsRow>
      <CtrlRow $mt={8}>
        <SmallBtn><Bolt /></SmallBtn>
        <Select $w={180}>waveform<SelectCaret><Caret /></SelectCaret></Select>
      </CtrlRow>
      <CtrlRow>
        <SmallBtn>*</SmallBtn>
        <Select $w={59}>dyn</Select>
        <Select $w={115} $c="#2fae5a">read<SelectCaret><Caret /></SelectCaret></Select>
      </CtrlRow>
      <CtrlRow>
        <SmallBtn><ClockBlue /></SmallBtn>
        <WellBox><Fork /></WellBox>
      </CtrlRow>
    </Controls>
    <MeterCell>
      <TrackMeter />
      <FxMeter $hi={t.n === 1} />
    </MeterCell>
    <CommentCell>{t.comment}</CommentCell>
    <MicCell />
    <InsertColumn plugs={t.n === 1} />
    <InsertColumn plugs={false} />
    <SendColumn letters={['a', 'b', 'c', 'd', 'e']} />
    <SendColumn letters={['f', 'g', 'h', 'i', 'j']} />
    <IoCol>
      <Select $w={156}>no input<SelectCaret><Caret /></SelectCaret></Select>
      <OutputBtn $w={156}>Main Monitor<GainIcon /></OutputBtn>
      <VolBox>
        <VolRow>vol<span>0.0</span></VolRow>
        <VolRow $line>pan<PanValue><PanArrow />0<PanArrow $flip /></PanValue></VolRow>
      </VolBox>
    </IoCol>
    <SideCol>
      <SideBtn $first $armed={t.n === 2}><FillSquare /></SideBtn>
      <SideBtn><CommentIcon /></SideBtn>
      <SideBtn>+</SideBtn>
    </SideCol>
    <Gutter />
  </TrackRow>
);

const TrackLane = ({ t }: { t: (typeof TRACKS)[number] }) => (
  <Lane $h={t.h}>
    <Clip $w={t.w} $bg={t.bg}>
      <Waveform w={t.w} color={t.wave} />
      <ClipName>{t.clip}</ClipName>
      <ClipGain>
        <GainFader><GainIcon /></GainFader>
        <GainValue>0 dB</GainValue>
      </ClipGain>
    </Clip>
  </Lane>
);

/* ---------- app ---------- */

export default function App() {
  return (
    <>
      <GlobalStyle />
      <MenuBar>
        <FaApple size={32} />
        <MenuLeft>
          <AppName>Pro Tools</AppName>
          {MENUS.map((m) => (
            <span key={m}>{m}</span>
          ))}
        </MenuLeft>
        <MenuSlot><Clock size={34} strokeWidth={1.6} /></MenuSlot>
        <MenuSlot>
          <Svg s={34}>
            <path fill="none" stroke="currentColor" strokeWidth="3.4" d="M8 23 C2 23 2 13 9 13 C10 4 23 4 24 13 C31 13 30 23 24 23 C17 23 15 13 10 15 C7 17 8 23 14 22" />
          </Svg>
        </MenuSlot>
        <MenuSlot>
          <Svg s={34}>
            <path d="M14 2 A13 13 0 1 0 14 28 L10 32 L18 27 A14 14 0 0 0 22 4 Z" fill="#eee" />
            <circle cx="23" cy="20" r="10" fill="#e8402c" />
          </Svg>
        </MenuSlot>
        <MenuSlot><FaDropbox size={34} /></MenuSlot>
        <MenuSlot>UA</MenuSlot>
        <MenuSlot>
          <Svg s={34}>
            <circle cx="16" cy="16" r="15" fill="#d8e8d0" />
            <path d="M6 6 L15 4 L17 14 L9 18 Z" fill="#3a8f5a" />
            <path d="M18 18 L28 16 L24 28 L16 29 Z" fill="#e8c070" />
          </Svg>
        </MenuSlot>
        <MenuSlot>
          <Svg s={34}><circle cx="16" cy="16" r="15" fill="#777" /><rect x="13" y="8" width="6" height="16" fill="#bbb" /></Svg>
        </MenuSlot>
        <MenuSlot><MenuBadge>⁄</MenuBadge></MenuSlot>
        <MenuSlot><MenuBadge>Δ</MenuBadge></MenuSlot>
        <MenuSlot $w={58}>
          <Svg s={34}>
            <circle cx="16" cy="16" r="15" fill="#e8e8e8" />
            <circle cx="16" cy="16" r="10" fill="none" stroke="#000" strokeWidth="2" strokeDasharray="3 3" />
            <circle cx="16" cy="16" r="3" fill="#000" />
          </Svg>
        </MenuSlot>
        <RpmText>1327rpm / 43°C</RpmText>
        <MenuSlot $w={76}><Bluetooth size={34} strokeWidth={1.8} /></MenuSlot>
        <MenuSlot $w={76}><MenuBadge>A</MenuBadge></MenuSlot>
        <MenuSlot $w={76}><Wifi size={34} strokeWidth={2.6} /></MenuSlot>
        <MenuSlot $w={76}>
          <Svg s={34}>
            <g fill="none" stroke="currentColor" strokeWidth="2">
              <circle cx="16" cy="15" r="13" />
              <circle cx="16" cy="15" r="8" />
              <circle cx="16" cy="15" r="3" />
            </g>
          </Svg>
        </MenuSlot>
        <MenuSlot $w={76}><History size={32} strokeWidth={2} /></MenuSlot>
        <MenuSlot $w={50}>
          <Svg s={40} h={34} vb="0 0 40 32">
            <rect x="2" y="2" width="22" height="12" rx="6" fill="none" stroke="currentColor" strokeWidth="2.5" />
            <rect x="2" y="17" width="22" height="13" rx="6.5" />
            <circle cx="34" cy="15" r="4" fill="#c88a10" />
          </Svg>
        </MenuSlot>
        <TimeText>Mon Aug 12  3 56 14 PM</TimeText>
      </MenuBar>
      <BehindEdge />

      <Window>
        <TitleBar>
          <Lights>
            <Light $c="#f0615a"><LightDot /></Light>
            <Light $c="#f5bd2e" />
            <Light $c="#3fc83f" />
          </Lights>
          <Svg s={24} h={32} vb="0 0 24 32" c="#3a3a3a">
            <rect width="24" height="32" />
            <circle cx="12" cy="13" r="7" fill="none" stroke="#3b8fc8" strokeWidth="2" />
          </Svg>
          Edit: 01 - Empty
        </TitleBar>

        <Toolbar>
          <Section $w={257} $left={18} $top={38}>
            <ModePanel>
              <ModeGrid>
                <ModeCell>SHUFFLE</ModeCell>
                <ModeCell>SPOT</ModeCell>
                <ModeCell $on>SLIP</ModeCell>
                <ModeCell>GRID<SelectCaret><Caret $s={6} $c={GREEN} /></SelectCaret></ModeCell>
              </ModeGrid>
            </ModePanel>
          </Section>

          <Section $w={210} $left={17} $top={24}>
            <Strip>
              <IconBtn $w={26} $h={62}><Svg s={14} h={22} vb="0 0 14 22"><Poly p="12,0 12,22 2,11" /></Svg></IconBtn>
              <IconBtn $w={62} $h={62}><WaveZoomIcon /></IconBtn>
              <IconBtn $w={62} $h={62}><TrackZoomIcon /></IconBtn>
              <IconBtn $w={28} $h={62}><Svg s={14} h={22} vb="0 0 14 22"><Poly p="2,0 2,22 12,11" /></Svg></IconBtn>
            </Strip>
            <RuleLine $w={170} />
            <BtnRow $gap={0}>
              {[1, 2, 3, 4, 5].map((n) => (
                <NumberBtn key={n} $w={36}>{n}</NumberBtn>
              ))}
            </BtnRow>
          </Section>

          <Section $w={650} $left={15} $top={8}>
            <ToolTop>
              <MoveBtn><MoveIcon /></MoveBtn>
              <IconBtn $w={75} $h={62}><Search size={42} strokeWidth={2.6} /></IconBtn>
              <SmartBox>
                <SmartInner>
                  <IconBtn $on $w={75} $h={62}><TrimIcon /></IconBtn>
                  <IconBtn $on $w={78} $h={62}><SelectorIcon /></IconBtn>
                  <IconBtn $on $w={72} $h={62}><Hand size={38} strokeWidth={1.6} color="#c5d4e0" /></IconBtn>
                </SmartInner>
              </SmartBox>
              <IconBtn $w={75} $h={62}><Volume2 size={40} strokeWidth={1.8} /></IconBtn>
              <IconBtn $w={76} $h={62}><Pencil size={36} strokeWidth={2} /></IconBtn>
            </ToolTop>
            <RuleLine $w={635} />
            <BtnRow>
              <IconBtn><ToolRowIcon kind="spot" /></IconBtn>
              <IconBtn $on><ToolRowIcon kind="up" /></IconBtn>
              <IconBtn $on><ToolRowIcon kind="list" /></IconBtn>
              <IconBtn><ToolRowIcon kind="cut" /></IconBtn>
              <RowSpace $w={60} />
              <IconBtn $on><ToolRowIcon kind="link" /></IconBtn>
              <IconBtn $on><ToolRowIcon kind="shield" /></IconBtn>
              <IconBtn><ToolRowIcon kind="boxes" /></IconBtn>
              <IconBtn><ToolRowIcon kind="copy" /></IconBtn>
            </BtnRow>
          </Section>

          <Section $w={676} $left={19}>
            <Panel $w={636} $h={144}>
              <CounterGrid>
                <MainPane>
                  <Label>Main</Label>
                  <Big>1| 3| 819</Big>
                  <Caret />
                  <Label>Sub</Label>
                  <Big $size={39}>00:00:01:21</Big>
                  <Caret />
                </MainPane>
                <SmallPane>
                  <Label>Start</Label><Val>1| 3| 819</Val>
                  <Label>End</Label><Val>1| 3| 819</Val>
                  <Label>Length</Label><Val>0| 0| 000</Val>
                </SmallPane>
                <CursorRow>
                  <CursorCell $w={219} $sep>
                    Cursor
                    <Val>1| 2| 363</Val>
                  </CursorCell>
                  <CursorCell $w={159} $sep>
                    <Svg s={36} h={28} c="#eee"><path d={spikyWave} /></Svg>
                    <Val>-136083</Val>
                  </CursorCell>
                  <MiniTag $w={32} $on><WaveIcon /></MiniTag>
                  <MiniTag $w={18} $on />
                  <Val>&nbsp;Dly</Val>
                  <MiniTag $w={24}>◉</MiniTag>
                  <MiniTag>*</MiniTag>
                  <MiniTag>S</MiniTag>
                  <MiniTag>M</MiniTag>
                </CursorRow>
              </CounterGrid>
            </Panel>
          </Section>

          <Section $w={332} $left={21} $top={36}>
            <Panel $w={296} $h={94}>
              <GridPane>
                <GridRow>
                  <GridTag>Grid</GridTag>
                  <FilmTag>1</FilmTag>
                  <Grow />
                  <Val>1| 0| 000</Val>
                  <CaretSlot><Caret /></CaretSlot>
                </GridRow>
                <GridRow $line>
                  Nudge
                  <NoteColor><NoteIcon /></NoteColor>
                  <Grow />
                  <Val>0| 0| 240</Val>
                  <CaretSlot><Caret /></CaretSlot>
                </GridRow>
              </GridPane>
            </Panel>
          </Section>

          <Section $w={651} $left={24}>
            <TopRow>
              <Panel $w={577} $h={94}>
                <PrePane>
                  <PreTags>
                    <PreTag>Pre-roll</PreTag><PreValue>2| 0| 000</PreValue>
                    <PreTag>Post-roll</PreTag><PreValue>0| 2| 000</PreValue>
                    <PreTag $on>Fade-in</PreTag><PreValue>0:00.250</PreValue>
                  </PreTags>
                  <PreSep />
                  <PreRight>
                    <Label>Start</Label><PreValue>1| 3| 819</PreValue>
                    <Label>End</Label><PreValue>1| 3| 819</PreValue>
                    <Label>Length</Label><PreValue>0| 0| 000</PreValue>
                  </PreRight>
                </PrePane>
              </Panel>
              <SideSquares>
                <SideSquare />
                <SideSquare />
              </SideSquares>
            </TopRow>
            <TransportRow>
              <IconBtn><ClockBlue s={26} /></IconBtn>
              <RowSpace $w={5} />
              <IconBtn><Svg s={24}><rect x="6" y="5" width="4" height="22" /><Poly p="24,5 24,27 10,16" /></Svg></IconBtn>
              <IconBtn><Svg s={24}><Poly p="16,6 16,26 4,16" /><Poly p="28,6 28,26 16,16" /></Svg></IconBtn>
              <IconBtn><Svg s={24}><Poly p="16,6 16,26 28,16" /><Poly p="4,6 4,26 16,16" /></Svg></IconBtn>
              <IconBtn><Svg s={24}><rect x="22" y="5" width="4" height="22" /><Poly p="8,5 8,27 22,16" /></Svg></IconBtn>
              <RowSpace $w={5} />
              <IconBtn><StopBlock /></IconBtn>
              <IconBtn><Svg s={28} c="#6ff2a2"><Poly p="8,4 8,28 26,16" /></Svg></IconBtn>
              <IconBtn><RecordDisc>P</RecordDisc></IconBtn>
            </TransportRow>
          </Section>

          <Section $w={316} $left={16}>
            <Panel $w={285} $h={91}>
              <CountPane>
                <CountTag>Count Off</CountTag><Val>1 bar</Val>
                <Label>Meter</Label><Val>4/4</Val>
                <Label>Tempo</Label>
                <TempoCell><NoteIcon /><Caret $s={5} /><TempoValue>100.0000</TempoValue></TempoCell>
              </CountPane>
            </Panel>
            <TransportRow>
              <IconBtn><ToolRowIcon kind="dial" /></IconBtn>
              <IconBtn><ToolRowIcon kind="click" /></IconBtn>
              <IconBtn><ToolRowIcon kind="ramp" /></IconBtn>
              <IconBtn $on><ToolRowIcon kind="lyre" /></IconBtn>
            </TransportRow>
          </Section>

          <Section $w={103} $left={0} $top={12}>
            <MeterOuter>
              <MeterInner><MeterBar /></MeterInner>
            </MeterOuter>
          </Section>

          <Section $w={628} $top={18}>
            <QuantPanel>
              <QuantRow>
                <span>Grid:</span>
                <RowSpace $w={8} />
                <NoteColor><NoteIcon /></NoteColor>
                <Grow />
                <QuantVal $w={100}>1/16 note</QuantVal>
                <RowSpace $w={14} />
                <Caret />
              </QuantRow>
              <QuantRow>
                <QuantTag $w={96}>Strength:</QuantTag>
                <QuantVal $w={94}>100%</QuantVal>
                <RowSpace $w={21} />
                <QuantTag $w={74}>Swing:</QuantTag>
                <QuantVal $w={94}>100%</QuantVal>
              </QuantRow>
            </QuantPanel>
            <QuantButtons>
              <WideBtn $w={191}>Q</WideBtn>
              <WideBtn $w={191}><Settings size={30} strokeWidth={2.6} color="#ddd" /></WideBtn>
            </QuantButtons>
            <Knob><Caret $s={6} $c="#222" /></Knob>
          </Section>
        </Toolbar>

        <Body>
          <LeftCol>
            <RulerLabel><RulerIcon />Min:Secs</RulerLabel>
            <RulerLabel $hi><RulerIcon><TrackRowsIcon /><Caret $s={6} /></RulerIcon>Bars|Beats</RulerLabel>
            <RulerLabel><RulerIcon />Timecode</RulerLabel>
            <RulerLabel>
              <RulerIcon><RowSpace $w={12} /><Svg s={14} h={16} vb="0 0 14 16"><Poly p="2,0 2,16 12,8" /></Svg></RulerIcon>
              Tempo
              <RulerAdd>+</RulerAdd>
            </RulerLabel>
            <RulerLabel>
              <RulerIcon><CommentIcon /></RulerIcon>
              Markers
              <RulerAdd><MarkerBtn />+</RulerAdd>
            </RulerLabel>
            <HeaderGap />
            <HeaderRow>
              <HeaderMain $span={3}>
                <InlineIcons><ColumnsIcon /><Caret $s={6} /></InlineIcons>
                <InlineIcons><ClockBlue s={22} /><Caret $s={6} /></InlineIcons>
              </HeaderMain>
              {HEADERS.map((h) => (
                <HeaderCell key={h}>{h}</HeaderCell>
              ))}
              <HeaderCell>
                <Svg s={20} h={30} vb="0 0 20 30" c="#f2c40c"><Poly p="2,2 18,2 18,20 10,28 2,20" /></Svg>
              </HeaderCell>
              <HeaderCell />
            </HeaderRow>
            {TRACKS.map((t) => (
              <TrackControls key={t.n} t={t} />
            ))}
            <BlankLeft />
            <BottomBar>
              <Svg s={16} h={24} vb="0 0 16 24"><rect x="1" width="2" height="24" /><Poly p="6,6 6,18 14,12" /></Svg>
              <Svg s={16} h={24} vb="0 0 16 24"><Poly p="8,0 12,8 9,8 9,16 7,16 7,8 4,8" /><rect x="3" y="18" width="10" height="5" /></Svg>
            </BottomBar>
          </LeftCol>

          <EditCol>
            <RulerTrack>
              {SECS.map((s) => (
                <Tick key={s} $w={150}>{s}</Tick>
              ))}
            </RulerTrack>
            <RulerTrack $hi>
              {BARS.map((s) => (
                <Tick key={s} $w={225}>{s}</Tick>
              ))}
            </RulerTrack>
            <RulerTrack>
              {CODES.map((s) => (
                <Tick key={s} $w={250}>{s}</Tick>
              ))}
            </RulerTrack>
            <TempoTrack>
              <RedFlag />
              <NoteIcon />
              100
            </TempoTrack>
            <EmptyRuler />
            <HeaderGap />
            <EditHeader />
            {TRACKS.map((t) => (
              <TrackLane key={t.n} t={t} />
            ))}
            <BlankEdit />
            <EditScroll>
              <ScrollThumb />
              <Grow />
              <NavBtn $w={32}>◂</NavBtn>
              <NavBtn $w={30}>▸</NavBtn>
              <NavBtn $w={28}>−</NavBtn>
              <NavBtn $w={28}>+</NavBtn>
              <NavBtn $w={30}>◂|</NavBtn>
            </EditScroll>
            <Playhead $x={619} $h={204} $c="#7a2020" />
            <Playhead $x={1283} $h={104} $c="#eee" />
            <FlagMark $x={0}><Svg s={10} h={30} vb="0 0 10 30" c="#eee"><path d="M0 0 H8 L2 6 V30 H0 Z" /></Svg></FlagMark>
            <FlagMark $x={1272}><Svg s={24} h={28} vb="0 0 24 28" c="#4aa8ec"><path d="M10 0 H14 V10 H24 L12 24 L0 10 H10 Z" /></Svg></FlagMark>
            <FlagMark $x={2166}><Svg s={14} h={26} vb="0 0 14 26" c="#eee"><path d="M0 0 H14 V26 H11 V6 Z" /></Svg></FlagMark>
            <SelectionLine />
          </EditCol>

          <RightCol>
            <SideRulerBtn><Svg s={20} vb="0 0 20 20"><rect x="2" y="1" width="16" height="2" /><rect x="9" y="5" width="2" height="6" /><Poly p="4,10 16,10 10,18" /></Svg></SideRulerBtn>
            <SortBox>a<SortZ>z</SortZ></SortBox>
            <ScrollSide><Svg s={24}><path d={spikyWave} /></Svg></ScrollSide>
            <ScrollSide><Svg s={24}><rect x="2" y="8" width="14" height="4" /><rect x="14" y="20" width="14" height="4" /></Svg></ScrollSide>
            <ScrollTrack />
            <VertBtn $h={32}>▴</VertBtn>
            <VertBtn $h={30}>▾</VertBtn>
            <VertBtn $h={28}>−</VertBtn>
            <VertBtn $h={28}>+</VertBtn>
            <VertBtn $h={28} />
          </RightCol>
        </Body>

        <TabBar>
          {TABS.map(([name, w, on, icon]) => (
            <Tab key={name} $w={w} $on={on}>
              {name}
              {icon && <TabIcon $on={on} />}
            </Tab>
          ))}
        </TabBar>
      </Window>

      <CursorArrow width="24" height="40" viewBox="0 0 24 40">
        <path d="M2 2 L2 30 L9 24 L13 36 L18 34 L14 22 L22 22 Z" fill="#000" stroke="#fff" strokeWidth="1.5" />
      </CursorArrow>
    </>
  );
}
